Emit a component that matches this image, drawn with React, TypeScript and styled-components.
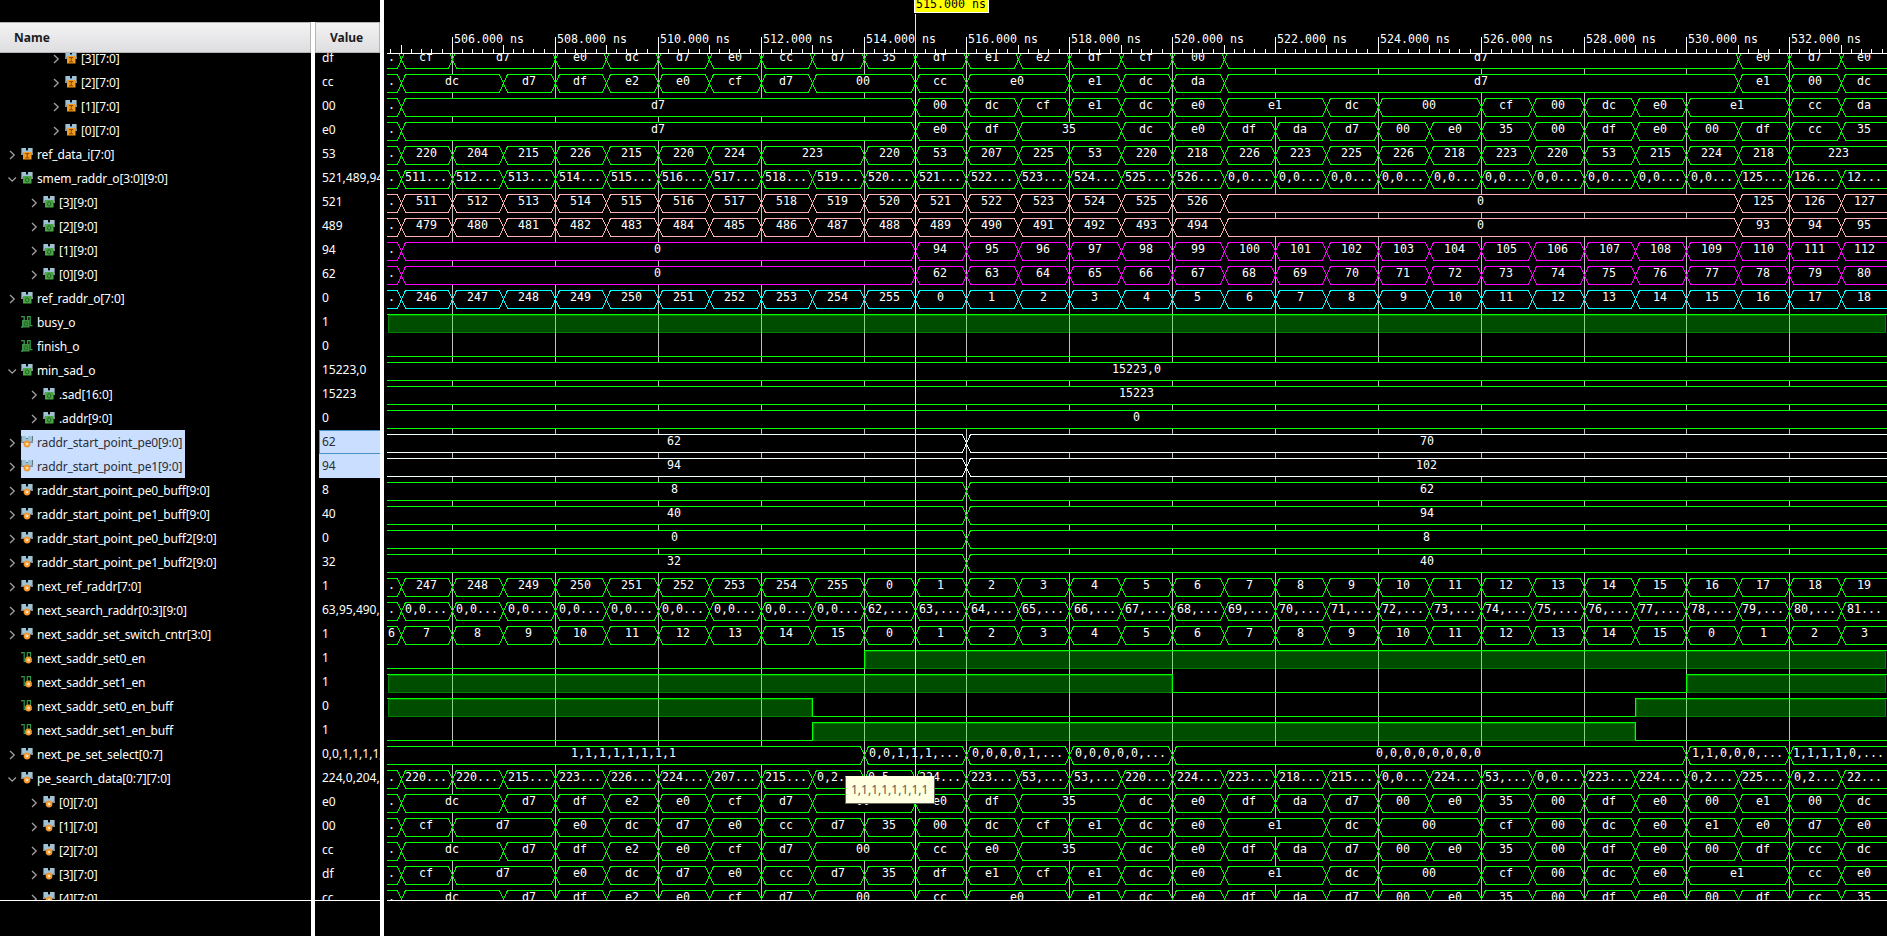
import React from "react";
import styled, { createGlobalStyle } from "styled-components";

const GlobalStyle = createGlobalStyle`
  html, body { margin: 0; background: #000; overflow: hidden; }
  * { box-sizing: border-box; }
`;

/* ---------- data ---------- */

type IconKind = "busIn" | "busOut" | "busReg" | "bitOut" | "bitReg";

interface Signal {
  name: string;
  value: string;
  level: number;
  icon: IconKind;
  toggle?: "open" | "closed";
  selected?: boolean;
  color?: string;
  lead?: string;
  bus?: string[];
  bit?: Array<[number, number]>;
}

const END = 29;
const GREEN = "#00ff00";
const PINK = "#ffafaf";
const MAGENTA = "#ff00ff";
const CYAN = "#00ffff";
const WHITE = "#f0ffff";

const parse = (text: string) => text.split(" ");
const range = (from: number, to: number, suffix = "") =>
  Array.from({ length: to - from + 1 }, (_, i) => `${from + i}${suffix}`);
const repeat = (text: string, count: number) => Array.from({ length: count }, () => text);

const signals: Signal[] = [
  { name: "[3][7:0]", value: "df", level: 2, icon: "busIn", toggle: "closed", lead: ".", bus: parse("cf d7:2 e0 dc d7 e0 cc d7 35 df e1 e2 df cf 00 d7:10 e0 d7 e0") },
  { name: "[2][7:0]", value: "cc", level: 2, icon: "busIn", toggle: "closed", lead: ".", bus: parse("dc:2 d7 df e2 e0 cf d7 00:2 cc e0:2 e1 dc da d7:10 e1 00 dc") },
  { name: "[1][7:0]", value: "00", level: 2, icon: "busIn", toggle: "closed", lead: ".", bus: parse("d7:10 00 dc cf e1 dc e0 e1:2 dc 00:2 cf 00 dc e0 e1:2 cc da") },
  { name: "[0][7:0]", value: "e0", level: 2, icon: "busIn", toggle: "closed", lead: ".", bus: parse("d7:10 e0 df 35:2 dc e0 df da d7 00 e0 35 00 df e0 00 df cc 35") },
  { name: "ref_data_i[7:0]", value: "53", level: 0, icon: "busIn", toggle: "closed", lead: ".", bus: parse("220 204 215 226 215 220 224 223:2 220 53 207 225 53 220 218 226 223 225 226 218 223 220 53 215 224 218 223:2") },
  { name: "smem_raddr_o[3:0][9:0]", value: "521,489,94,62", level: 0, icon: "busOut", toggle: "open", lead: ".", bus: [...range(511, 526, "..."), ...repeat("0,0...", 10), "125...", "126...", "12..."] },
  { name: "[3][9:0]", value: "521", level: 1, icon: "busOut", toggle: "closed", color: PINK, lead: ".", bus: [...range(511, 526), "0:10", "125", "126", "127"] },
  { name: "[2][9:0]", value: "489", level: 1, icon: "busOut", toggle: "closed", color: PINK, lead: ".", bus: [...range(479, 494), "0:10", "93", "94", "95"] },
  { name: "[1][9:0]", value: "94", level: 1, icon: "busOut", toggle: "closed", color: MAGENTA, lead: ".", bus: ["0:10", ...range(94, 112)] },
  { name: "[0][9:0]", value: "62", level: 1, icon: "busOut", toggle: "closed", color: MAGENTA, lead: ".", bus: ["0:10", ...range(62, 80)] },
  { name: "ref_raddr_o[7:0]", value: "0", level: 0, icon: "busOut", toggle: "closed", color: CYAN, lead: ".", bus: [...range(246, 255), ...range(0, 18)] },
  { name: "busy_o", value: "1", level: 0, icon: "bitOut", bit: [[-1, 1]] },
  { name: "finish_o", value: "0", level: 0, icon: "bitOut", bit: [[-1, 0]] },
  { name: "min_sad_o", value: "15223,0", level: 0, icon: "busOut", toggle: "open", bus: ["15223,0:30"] },
  { name: ".sad[16:0]", value: "15223", level: 1, icon: "busOut", toggle: "closed", bus: ["15223:30"] },
  { name: ".addr[9:0]", value: "0", level: 1, icon: "busOut", toggle: "closed", bus: ["0:30"] },
  { name: "raddr_start_point_pe0[9:0]", value: "62", level: 0, icon: "busReg", toggle: "closed", selected: true, color: WHITE, bus: ["62:12", "70:18"] },
  { name: "raddr_start_point_pe1[9:0]", value: "94", level: 0, icon: "busReg", toggle: "closed", selected: true, color: WHITE, bus: ["94:12", "102:18"] },
  { name: "raddr_start_point_pe0_buff[9:0]", value: "8", level: 0, icon: "busReg", toggle: "closed", bus: ["8:12", "62:18"] },
  { name: "raddr_start_point_pe1_buff[9:0]", value: "40", level: 0, icon: "busReg", toggle: "closed", bus: ["40:12", "94:18"] },
  { name: "raddr_start_point_pe0_buff2[9:0]", value: "0", level: 0, icon: "busReg", toggle: "closed", bus: ["0:12", "8:18"] },
  { name: "raddr_start_point_pe1_buff2[9:0]", value: "32", level: 0, icon: "busReg", toggle: "closed", bus: ["32:12", "40:18"] },
  { name: "next_ref_raddr[7:0]", value: "1", level: 0, icon: "busReg", toggle: "closed", lead: ".", bus: [...range(247, 255), ...range(0, 19)] },
  { name: "next_search_raddr[0:3][9:0]", value: "63,95,490,522", level: 0, icon: "busReg", toggle: "closed", lead: ".", bus: [...repeat("0,0...", 9), ...range(62, 80, ",..."), "81..."] },
  { name: "next_saddr_set_switch_cntr[3:0]", value: "1", level: 0, icon: "busReg", toggle: "closed", lead: "6", bus: [...range(7, 15), ...range(0, 15), ...range(0, 3)] },
  { name: "next_saddr_set0_en", value: "1", level: 0, icon: "bitReg", bit: [[-1, 0], [9, 1]] },
  { name: "next_saddr_set1_en", value: "1", level: 0, icon: "bitReg", bit: [[-1, 1], [15, 0], [25, 1]] },
  { name: "next_saddr_set0_en_buff", value: "0", level: 0, icon: "bitReg", bit: [[-1, 1], [8, 0], [24, 1]] },
  { name: "next_saddr_set1_en_buff", value: "1", level: 0, icon: "bitReg", bit: [[-1, 0], [8, 1], [24, 0]] },
  { name: "next_pe_set_select[0:7]", value: "0,0,1,1,1,1,1,1", level: 0, icon: "busReg", toggle: "closed", bus: ["1,1,1,1,1,1,1,1:10", "0,0,1,1,1,...:2", "0,0,0,0,1,...:2", "0,0,0,0,0,...:2", "0,0,0,0,0,0,0,0:10", "1,1,0,0,0,...:2", "1,1,1,1,0,...:2"] },
  { name: "pe_search_data[0:7][7:0]", value: "224,0,204,223", level: 0, icon: "busReg", toggle: "open", lead: ".", bus: parse("220... 220... 215... 223... 226... 224... 207... 215... 0,2... 0,5... 224... 223... 53,... 53,... 220... 224... 223... 218... 215... 0,0... 224... 53,... 0,0... 223... 224... 0,2... 225... 0,2... 22...") },
  { name: "[0][7:0]", value: "e0", level: 1, icon: "busReg", toggle: "closed", lead: ".", bus: parse("dc:2 d7 df e2 e0 cf d7 00:2 e0 df 35:2 dc e0 df da d7 00 e0 35 00 df e0 00 e1 00 dc") },
  { name: "[1][7:0]", value: "00", level: 1, icon: "busReg", toggle: "closed", lead: ".", bus: parse("cf d7:2 e0 dc d7 e0 cc d7 35 00 dc cf e1 dc e0 e1:2 dc 00:2 cf 00 dc e0 e1 e0 d7 e0") },
  { name: "[2][7:0]", value: "cc", level: 1, icon: "busReg", toggle: "closed", lead: ".", bus: parse("dc:2 d7 df e2 e0 cf d7 00:2 cc e0 35:2 dc e0 df da d7 00 e0 35 00 df e0 00 df cc dc") },
  { name: "[3][7:0]", value: "df", level: 1, icon: "busReg", toggle: "closed", lead: ".", bus: parse("cf d7:2 e0 dc d7 e0 cc d7 35 df e1 cf e1 dc e0 e1:2 dc 00:2 cf 00 dc e0 e1:2 cc e0") },
  { name: "[4][7:0]", value: "cc", level: 1, icon: "busReg", toggle: "closed", lead: ".", bus: parse("dc:2 d7 df e2 e0 cf d7 00:2 cc e0:2 e1 dc e0 df da d7 00 e0 35 00 df e0 00 df cc 35") },
];

/* ---------- layout parts ---------- */

const Viewer = styled.div`
  display: flex;
  width: 1887px;
  height: 936px;
  overflow: hidden;
  background: #000;
  color: #fff;
  font: 12px "Noto Sans", "Open Sans", sans-serif;
`;

const Sidebar = styled.div`
  display: flex;
  width: 380px;
  height: 936px;
  padding-top: 22px;
`;

const Column = styled.div<{ $width: number }>`
  display: flex;
  flex-direction: column;
  width: ${(p) => p.$width}px;
  height: 100%;
`;

const Divider = styled.div`
  flex: none;
  width: 4px;
  height: 100%;
  background: #fff;
`;

const HeaderCell = styled.div<{ $first?: boolean }>`
  flex: none;
  height: 31px;
  padding-left: 14px;
  border: 1px solid #b4b6b5;
  border-left-width: ${(p) => (p.$first ? 0 : 1)}px;
  background: linear-gradient(#f3f3f4, #dedee0);
  color: #1b1b1d;
  font-weight: 700;
  line-height: 30px;
`;

const Rows = styled.div`
  height: 848px;
  overflow: hidden;
  border-bottom: 1px solid #fff;
`;

const RowList = styled.div`
  display: flex;
  flex-direction: column;
  margin-top: -7px;
`;

const NameRow = styled.div<{ $level: number }>`
  display: flex;
  flex: none;
  align-items: center;
  height: 24px;
  padding-left: ${(p) => 8 + p.$level * 22}px;
`;

const ToggleSlot = styled.span`
  display: flex;
  width: 13px;
  height: 24px;
`;

const NameLabel = styled.span<{ $selected?: boolean }>`
  display: flex;
  align-items: center;
  gap: 4px;
  height: 24px;
  padding-right: 3px;
  white-space: nowrap;
  letter-spacing: -0.13px;
  color: ${(p) => (p.$selected ? "#2b2d33" : "#fff")};
  background: ${(p) => (p.$selected ? "#cadeff" : "transparent")};
`;

const ValueRow = styled.div<{ $selected?: boolean; $focused?: boolean }>`
  flex: none;
  height: 24px;
  margin-left: 4px;
  padding-left: 3px;
  overflow: hidden;
  white-space: nowrap;
  line-height: 24px;
  color: ${(p) => (p.$selected ? "#2b2d33" : "#fff")};
  background: ${(p) => (p.$selected ? "#cadeff" : "transparent")};
  box-shadow: ${(p) => (p.$focused ? "inset 1px 1px #4a90c8, inset 0 -1px #4a90c8" : "none")};
`;

const WaveArea = styled.div`
  position: relative;
  flex: none;
  width: 1503px;
  height: 936px;
`;

const WaveSvg = styled.svg`
  display: block;
  text {
    font-family: "DejaVu Sans Mono", monospace;
    font-size: 11.63px;
    fill: #fff;
    white-space: pre;
  }
`;

const Tooltip = styled.div`
  position: absolute;
  left: 461px;
  top: 776px;
  width: 90px;
  height: 28px;
  padding-left: 5px;
  border: 1px solid #63635a;
  border-top-color: #ffffe1;
  background: #ffffe1;
  color: #5a5a5a;
  line-height: 26px;
  white-space: nowrap;
`;

/* ---------- icons ---------- */

const Toggle = ({ kind }: { kind?: "open" | "closed" }) => (
  <ToggleSlot>
    {kind && (
      <svg width="9" height="24" viewBox="0 0 9 24" fill="none" stroke="#a0a0a0" strokeWidth="1.3">
        <path d={kind === "open" ? "M0.5 11.5L4.2 15.2L7.9 11.5" : "M2 9L6.2 13L2 17"} />
      </svg>
    )}
  </ToggleSlot>
);

const SignalIcon = ({ kind }: { kind: IconKind }) => {
  const bus = kind.startsWith("bus");
  return (
    <svg width="12" height="12" viewBox="0 0 12 12">
      {bus ? (
        <>
          <path d="M0 0H5V2H7V0H12V7H0Z" fill="#66757c" />
          <path d="M1 0H5V3H6V6H1ZM7 0H11V6H6V3H7Z" fill="#9cc3d8" />
          <path d="M0 5H2V7H0ZM10 5H12V7H10Z" fill="#85949b" />
        </>
      ) : kind === "bitOut" ? (
        <path d="M0 .7H3.2V7M0 11H2M6.6 6V.7H9.2V9.6H11.5" fill="none" stroke="#2f9a45" strokeWidth="1.3" />
      ) : (
        <path d="M0 .7H3.2V9.5H6.3V.7H9.5V9.5H11" fill="none" stroke="#2f9a45" strokeWidth="1.2" />
      )}
      {kind === "busIn" && (
        <>
          <rect x="2" y="4" width="8.5" height="7.5" fill="#f39a1f" />
          <path d="M4.2 5.6H8.2M6.2 5.6V9.9M4.2 9.9H8.2" stroke="#7a4a09" strokeWidth="1" />
        </>
      )}
      {(kind === "busOut" || kind === "bitOut") && (
        <>
          <rect x={bus ? 2 : 1} y="4" width={bus ? 8.5 : 7.5} height="7.5" fill={bus ? "#4ba646" : "#3f8f42"} />
          <ellipse cx={bus ? 6.2 : 5} cy="7.9" rx="1.7" ry="2.2" fill="none" stroke="#22642a" />
        </>
      )}
      {(kind === "busReg" || kind === "bitReg") && (
        <>
          <circle cx={bus ? 6 : 7.5} cy="8" r="3.4" fill="#ef9730" />
          <circle cx={bus ? 6 : 7.5} cy="8" r="1.5" fill="#ffdca8" />
        </>
      )}
    </svg>
  );
};

/* ---------- waveform drawing ---------- */

const EDGES = [
  401, 452, 503, 555, 606, 658, 709, 761, 812, 864, 915, 966, 1018, 1069, 1121, 1172, 1224,
  1275, 1326, 1378, 1429, 1481, 1532, 1584, 1635, 1686, 1738, 1789, 1841,
];
const LEFT = 387;
const RIGHT = 1887;
const CHAR = 7;
const ROW_TOP = 46;
const ROW_HEIGHT = 24;

const edgeX = (n: number) => (n < 0 ? 383 : n >= END ? 1888 : EDGES[n]);

const BusWave = ({ signal, top }: { signal: Signal; top: number }) => {
  const entries = [...(signal.lead ? [signal.lead] : []), ...(signal.bus ?? [])];
  const hi = top + 4.5;
  const mid = top + 13.5;
  const lo = top + 22.5;
  let at = -1;
  return (
    <g>
      {entries.map((entry, i) => {
        const [label, span] = entry.split(":");
        const from = at;
        const to = Math.min(END, at + (span ? Number(span) : 1));
        at = to;
        const a = edgeX(from);
        const b = edgeX(to);
        const start = from < 0 ? `M${LEFT} ${hi}` : `M${a + 0.5} ${mid}L${a + 4.5} ${hi}`;
        const middle = to >= END ? `H${RIGHT + 2}V${lo}` : `H${b - 3.5}L${b + 0.5} ${mid}L${b - 3.5} ${lo}`;
        const finish = from < 0 ? `H${LEFT}` : `H${a + 4.5}L${a + 0.5} ${mid}`;
        const full = from < 0 && to >= END;
        const center = full ? 1137 : (a + b) / 2;
        return (
          <React.Fragment key={i}>
            <path d={start + middle + finish} fill="#000" stroke={signal.color ?? GREEN} shapeRendering="crispEdges" />
            <text x={Math.floor(center - (label.length * CHAR) / 2)} y={top + 15} textLength={label.length * CHAR}>
              {label}
            </text>
          </React.Fragment>
        );
      })}
    </g>
  );
};

const BitWave = ({ signal, top }: { signal: Signal; top: number }) => {
  const steps = signal.bit ?? [];
  const hi = top + 4.5;
  const lo = top + 22.5;
  let line = "";
  steps.forEach(([n, level], i) => {
    const x = n < 0 ? LEFT : EDGES[n] + 0.5;
    line += `${i === 0 ? "M" : "H"}${x} ${i === 0 ? (level ? hi : lo) : ""}`;
    if (i > 0) line += `V${level ? hi : lo}`;
  });
  line += `H${RIGHT}`;
  return (
    <g shapeRendering="crispEdges">
      {steps.map(([n, level], i) => {
        if (!level) return null;
        const x = n < 0 ? 388 : EDGES[n] + 1;
        const end = i + 1 < steps.length ? EDGES[steps[i + 1][0]] : 1886;
        return (
          <React.Fragment key={n}>
            <rect x={x} y={top + 5} width={end - x} height={18} fill={GREEN} fillOpacity={0.3} />
            <rect x={x + 0.5} y={top + 5.5} width={end - x - 1} height={17} fill="none" stroke={GREEN} strokeOpacity={0.3} />
          </React.Fragment>
        );
      })}
      <path d={line} fill="none" stroke={GREEN} />
    </g>
  );
};

const Ruler = () => {
  const ticks: Array<[number, number]> = [[390, 49]];
  EDGES.forEach((x, n) => {
    ticks.push([x, n % 2 ? 37 : 45]);
    for (let k = 1; k < 5; k++) {
      const tick = Math.floor(x + k * 10.29);
      if (tick < RIGHT) ticks.push([tick, 49]);
    }
  });
  return (
    <g>
      <path
        d={`M${LEFT} 53.5H${RIGHT}` + ticks.map(([x, y]) => `M${x + 0.5} ${y}V53`).join("")}
        stroke="#fff"
        shapeRendering="crispEdges"
      />
      {EDGES.map((x, n) =>
        n % 2 ? (
          <text key={n} x={x + 2} y={43} textLength={70}>
            {`${505 + n}.000 ns`}
          </text>
        ) : null
      )}
    </g>
  );
};

const Waveforms = () => (
  <WaveSvg width="1503" height="936" viewBox="384 0 1503 936">
    <clipPath id="rows">
      <rect x="384" y="54" width="1503" height="846" />
    </clipPath>
    <g clipPath="url(#rows)">
      <path
        d={EDGES.filter((_, n) => n % 2).map((x) => `M${x + 0.5} 54V900`).join("")}
        stroke="#c0c0c0"
        shapeRendering="crispEdges"
      />
      {signals.map((signal, i) => {
        const top = ROW_TOP + i * ROW_HEIGHT;
        return signal.bit ? (
          <BitWave key={i} signal={signal} top={top} />
        ) : (
          <BusWave key={i} signal={signal} top={top} />
        );
      })}
    </g>
    <path d={`M${LEFT} 900.5H${RIGHT}`} stroke="#fff" shapeRendering="crispEdges" />
    <Ruler />
    <path d="M915.5 14V900" stroke="#ffff00" shapeRendering="crispEdges" />
    <rect x="914.5" y="-1.5" width="74" height="14" fill="#ffff00" stroke="#fff" shapeRendering="crispEdges" />
    <text x="916" y="8" textLength="70" style={{ fill: "#000" }}>
      515.000 ns
    </text>
  </WaveSvg>
);

export default function App() {
  const focused = signals.findIndex((s) => s.selected);
  return (
    <>
      <GlobalStyle />
      <Viewer>
        <Sidebar>
          <Column $width={311}>
            <HeaderCell $first>Name</HeaderCell>
            <Rows>
              <RowList>
                {signals.map((s, i) => (
                  <NameRow key={i} $level={s.level}>
                    <Toggle kind={s.toggle} />
                    <NameLabel $selected={s.selected}>
                      <SignalIcon kind={s.icon} />
                      {s.name}
                    </NameLabel>
                  </NameRow>
                ))}
              </RowList>
            </Rows>
          </Column>
          <Divider />
          <Column $width={65}>
            <HeaderCell>Value</HeaderCell>
            <Rows>
              <RowList>
                {signals.map((s, i) => (
                  <ValueRow key={i} $selected={s.selected} $focused={i === focused}>
                    {s.value}
                  </ValueRow>
                ))}
              </RowList>
            </Rows>
          </Column>
        </Sidebar>
        <Divider />
        <WaveArea>
          <Waveforms />
          <Tooltip>1,1,1,1,1,1,1,1</Tooltip>
        </WaveArea>
      </Viewer>
    </>
  );
}
